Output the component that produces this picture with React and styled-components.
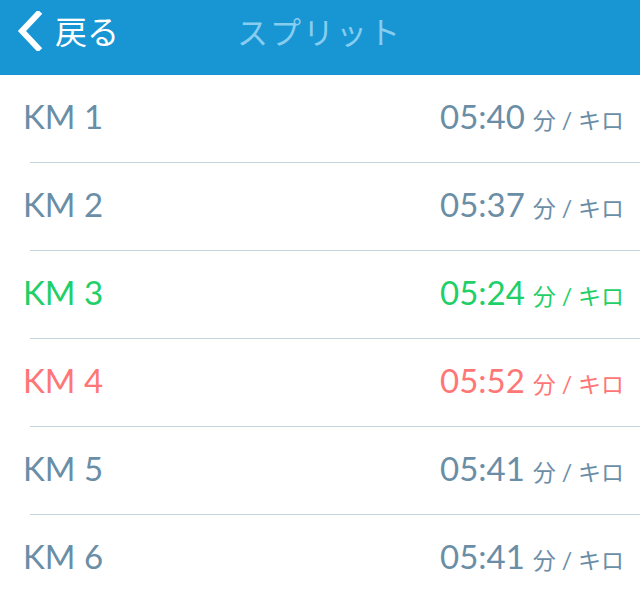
import React from "react";
import styled, { createGlobalStyle } from "styled-components";

const GlobalStyle = createGlobalStyle`
  html, body {
    margin: 0;
    padding: 0;
    background: #ffffff;
  }
  body {
    font-family: Lato, "Noto Sans CJK JP", sans-serif;
  }
`;

const Page = styled.div`
  width: 640px;
  height: 602px;
  overflow: hidden;
  background: #ffffff;
`;

const Header = styled.div`
  height: 75px;
  box-sizing: border-box;
  padding-bottom: 13px;
  background: #1896d3;
  display: flex;
  align-items: center;
`;

const BackButton = styled.div`
  display: flex;
  align-items: center;
  padding-left: 16px;
  width: 221px;
  color: #ffffff;
  font-family: Lato, "Noto Sans CJK JP", sans-serif;
  font-size: 32px;
`;

const BackLabel = styled.span`
  margin-left: 11px;
  margin-top: -2px;
`;

const Title = styled.div`
  color: #86cdf0;
  font-family: Lato, "Noto Sans CJK JP", sans-serif;
  font-size: 31px;
  letter-spacing: 2px;
  margin-top: -2px;
`;

const List = styled.div`
  display: flex;
  flex-direction: column;
`;

const Row = styled.div`
  height: 87px;
  box-sizing: border-box;
  padding: 0 16px 5px 23px;
  display: flex;
  align-items: center;
  justify-content: space-between;
  color: ${(p) => p.$color};
`;

const Divider = styled.div`
  height: 1px;
  margin-left: 30px;
  background: #c6d4de;
`;

const Label = styled.span`
  font-size: 33px;
  font-family: Lato, sans-serif;
`;

const Pace = styled.div`
  display: flex;
  align-items: baseline;
`;

const Time = styled.span`
  font-size: 33px;
  font-family: Lato, sans-serif;
`;

const Unit = styled.span`
  font-size: 23px;
  margin-left: 8px;
  font-family: Lato, "Noto Sans CJK JP", sans-serif;
`;

const colors = {
  normal: "#6a8ea6",
  fast: "#1fcf68",
  slow: "#ff7676",
};

const splits = [
  { km: 1, time: "05:40", kind: "normal" },
  { km: 2, time: "05:37", kind: "normal" },
  { km: 3, time: "05:24", kind: "fast" },
  { km: 4, time: "05:52", kind: "slow" },
  { km: 5, time: "05:41", kind: "normal" },
  { km: 6, time: "05:41", kind: "normal" },
];

const Chevron = () => (
  <svg width="28" height="40" viewBox="0 0 28 40">
    <path
      d="M22 3 L6 20 L22 37"
      fill="none"
      stroke="#ffffff"
      strokeWidth="6"
      strokeLinecap="square"
    />
  </svg>
);

export default function App() {
  return (
    <Page>
      <GlobalStyle />
      <Header>
        <BackButton>
          <Chevron />
          <BackLabel>戻る</BackLabel>
        </BackButton>
        <Title>スプリット</Title>
      </Header>
      <List>
        {splits.map((s, i) => (
          <React.Fragment key={s.km}>
            {i > 0 && <Divider />}
            <Row $color={colors[s.kind]}>
              <Label>KM {s.km}</Label>
              <Pace>
                <Time>{s.time}</Time>
                <Unit>分 / キロ</Unit>
              </Pace>
            </Row>
          </React.Fragment>
        ))}
      </List>
    </Page>
  );
}
